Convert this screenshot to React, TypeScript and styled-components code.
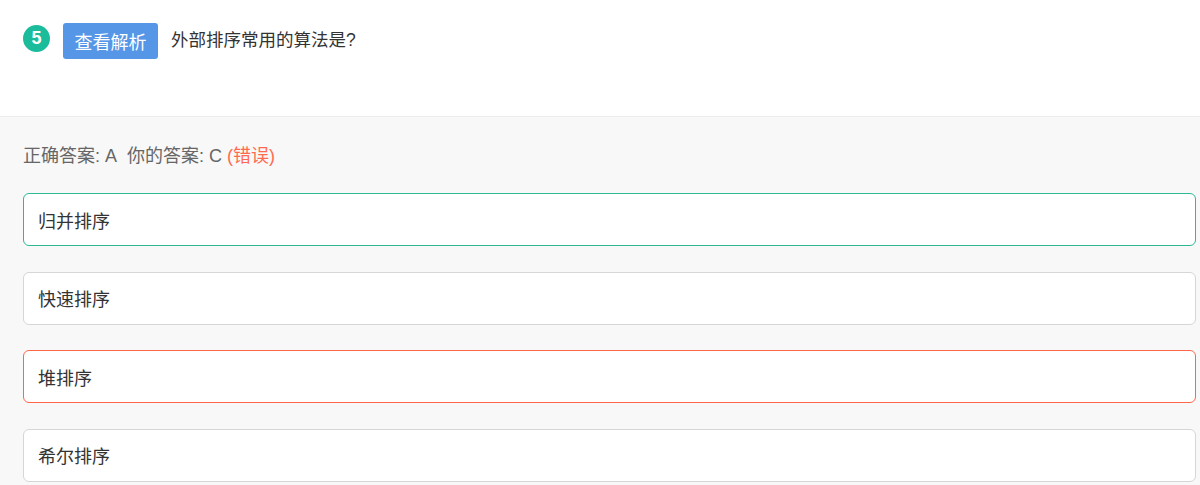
import styled, { createGlobalStyle } from 'styled-components'

const GlobalStyle = createGlobalStyle`
  html, body {
    margin: 0;
    padding: 0;
    background: #f8f8f8;
  }

  body {
    font-family: "Liberation Sans", "Noto Sans CJK SC", sans-serif;
    color: #333;
  }
`

const Header = styled.div`
  height: 117px;
  box-sizing: border-box;
  background: #fff;
  border-bottom: 1px solid #ececec;
  padding: 23px 23px 0 23px;
  display: flex;
  align-items: flex-start;
`

const Num = styled.div`
  width: 27px;
  height: 27px;
  margin-top: 2px;
  border-radius: 50%;
  background: #1abc9c;
  color: #fff;
  font-size: 18px;
  font-weight: 600;
  display: flex;
  align-items: center;
  justify-content: center;
  line-height: 1;
  padding-bottom: 2px;
  box-sizing: border-box;
`

const AnalysisButton = styled.button`
  margin-left: 13px;
  width: 95px;
  height: 36px;
  border: none;
  border-radius: 3px;
  background: #5596e6;
  color: #fff;
  font-family: "Liberation Sans", "Noto Sans CJK SC", sans-serif;
  font-size: 18px;
  padding: 0;
  cursor: pointer;
`

const Question = styled.div`
  margin-left: 13px;
  font-size: 17.5px;
  line-height: 34px;
  color: #333;
`

const Body = styled.div`
  padding: 26px 4px 0 23px;
`

const Result = styled.div`
  font-size: 18px;
  line-height: 26px;
  color: #666;
  margin-bottom: 24px;

  .gap {
    margin-left: 10px;
  }

  .wrong {
    color: #ff6a4f;
  }
`

const Options = styled.div`
  display: flex;
  flex-direction: column;
  gap: 25.5px;
`

const Option = styled.div<{ $state?: 'right' | 'wrong' }>`
  height: 53px;
  box-sizing: border-box;
  background: #fff;
  border-radius: 6px;
  border: 1px solid
    ${({ $state }) => ($state === 'right' ? '#2cb996' : $state === 'wrong' ? '#ff6549' : '#d6d6d6')};
  padding: 0 14px;
  display: flex;
  align-items: center;
  font-size: 18px;
  color: #333;
`

const options: { text: string; state?: 'right' | 'wrong' }[] = [
  { text: '归并排序', state: 'right' },
  { text: '快速排序' },
  { text: '堆排序', state: 'wrong' },
  { text: '希尔排序' },
]

export default function App() {
  return (
    <>
      <GlobalStyle />
      <Header>
        <Num>5</Num>
        <AnalysisButton>查看解析</AnalysisButton>
        <Question>外部排序常用的算法是?</Question>
      </Header>
      <Body>
        <Result>
          正确答案: A<span className="gap">你的答案: C</span> <span className="wrong">(错误)</span>
        </Result>
        <Options>
          {options.map((o) => (
            <Option key={o.text} $state={o.state}>
              {o.text}
            </Option>
          ))}
        </Options>
      </Body>
    </>
  )
}
